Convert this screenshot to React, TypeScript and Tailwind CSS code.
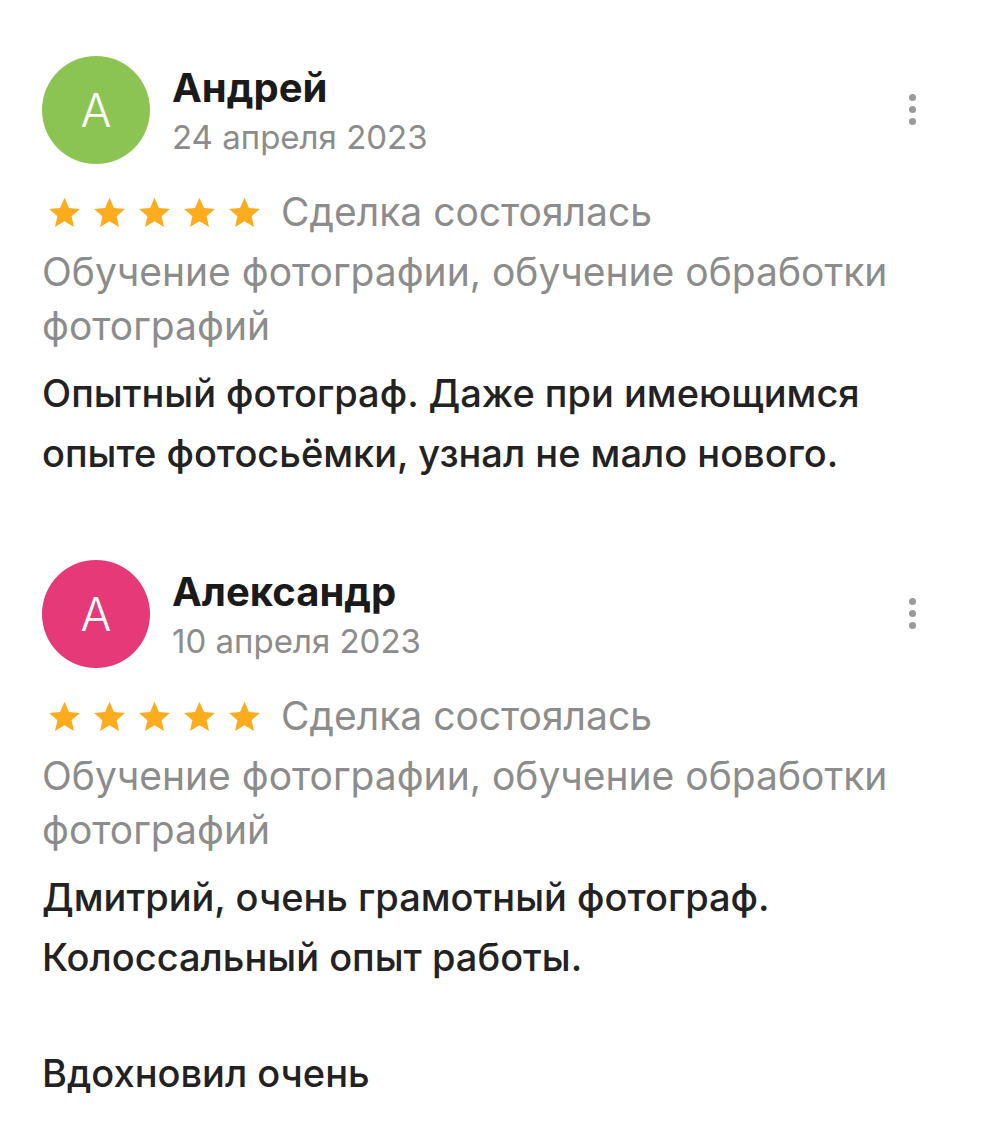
import React from 'react'

type Review = {
    name: string
    date: string
    color: string
    category: string
    text: string[]
}

const reviews: Review[] = [
    {
        name: 'Андрей',
        date: '24 апреля 2023',
        color: 'bg-[#8cc453]',
        category: 'Обучение фотографии, обучение обработки фотографий',
        text: ['Опытный фотограф. Даже при имеющимся опыте фотосьёмки, узнал не мало нового.'],
    },
    {
        name: 'Александр',
        date: '10 апреля 2023',
        color: 'bg-[#e63a78]',
        category: 'Обучение фотографии, обучение обработки фотографий',
        text: ['Дмитрий, очень грамотный фотограф. Колоссальный опыт работы.', 'Вдохновил очень'],
    },
]

const Star = () => (
    <svg width="37" height="37" viewBox="0 0 24 24" className="text-[#fcac1c]">
        <path fill="currentColor" d="M12 2.5l2.9 6.6 7.1.6-5.4 4.7 1.6 7-6.2-3.7-6.2 3.7 1.6-7L2 9.7l7.1-.6z" />
    </svg>
)

const ReviewCard = ({ review }: { review: Review }) => {
  return (
    <div className="flex flex-col">
        <div className="flex items-center">
            <div className={`w-[108px] h-[108px] rounded-full ${review.color} flex items-center justify-center text-white text-[46px] font-light`}>
                A
            </div>
            <div className="ml-[22px] pt-[5px] flex-1 flex flex-col">
                <div className="text-[40px] font-bold text-[#1a1a1a] leading-[48px]">{review.name}</div>
                <div className="text-[33px] text-[#8c8c8c] leading-[50px]">{review.date}</div>
            </div>
            <div className="flex flex-col gap-[5px] mr-[84px] -mt-[2px]">
                <span className="w-[7px] h-[7px] rounded-full bg-[#9a9a9a]" />
                <span className="w-[7px] h-[7px] rounded-full bg-[#9a9a9a]" />
                <span className="w-[7px] h-[7px] rounded-full bg-[#9a9a9a]" />
            </div>
        </div>
        <div className="flex items-center mt-[18px]">
            <div className="flex gap-[8px] ml-[4px]">
                <Star /><Star /><Star /><Star /><Star />
            </div>
            <span className="ml-[18px] text-[39px] text-[#8c8c8c] leading-[60px]">Сделка состоялась</span>
        </div>
        <div className="mt-[3px] text-[39px] text-[#8c8c8c] leading-[54px] pr-[80px]">{review.category}</div>
        <div className="mt-[10px] text-[#222] text-[38px] font-medium leading-[60px] pr-[110px]">
            {review.text.map((t, i) => (
                <p key={i} className={i > 0 ? 'mt-[56px]' : ''}>{t}</p>
            ))}
        </div>
    </div>
  )
}

const App = () => {
  return (
    <div className="w-[1000px] h-[1136px] bg-white overflow-hidden pl-[42px] pt-[56px] font-['Inter',sans-serif]">
        <div className="flex flex-col gap-[77px]">
            {reviews.map((r) => <ReviewCard key={r.name} review={r} />)}
        </div>
    </div>
  )
}

export default App
